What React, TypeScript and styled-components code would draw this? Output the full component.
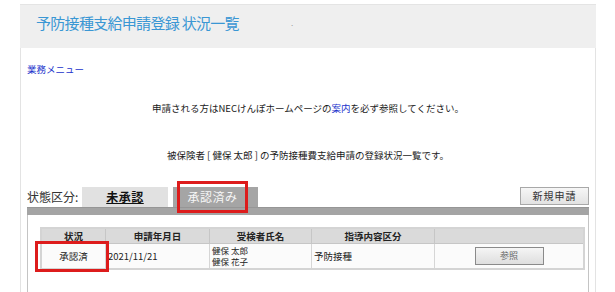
import React from "react";
import styled, { createGlobalStyle } from "styled-components";

const GlobalStyle = createGlobalStyle`
  html, body {
    margin: 0;
    padding: 0;
    background: #ffffff;
  }
  body {
    font-family: "Noto Sans CJK JP", "Noto Sans", sans-serif;
    color: #222222;
  }
`;

const Page = styled.div`
  width: 576px;
  margin: 4px 0 0 20px;
`;

const Header = styled.header`
  height: 44px;
  box-sizing: border-box;
  background: #efefef;
  border-top: 1px solid #e4e4e4;
  display: flex;
  align-items: flex-start;
  padding: 8px 0 0 16px;
`;

const Title = styled.h1`
  margin: 0;
  font-size: 15px;
  font-weight: normal;
  line-height: 20px;
  letter-spacing: -0.7px;
  color: #3a97d4;
`;

const Dot = styled.span`
  margin: 4px 0 0 52px;
  font-size: 8px;
  line-height: 12px;
  color: #9a9a9a;
`;

const Content = styled.main`
  border-left: 1px solid #e3e3e3;
  border-right: 1px solid #e3e3e3;
  padding: 14px 6px 0;
  min-height: 244px;
`;

const MenuLink = styled.a`
  display: block;
  font-size: 9.5px;
  line-height: 14px;
  color: #2233cc;
  text-decoration: none;
`;

const Notice = styled.p<{ $gap: number }>`
  margin: ${(p) => p.$gap}px 0 0;
  text-align: center;
  font-size: 9.5px;
  line-height: 14px;
  color: #1a1a1a;
  a {
    color: #2233cc;
    text-decoration: none;
  }
`;

const TabRow = styled.div`
  margin-top: 25px;
  display: flex;
  align-items: flex-end;
  height: 20px;
`;

const TabLabel = styled.span`
  width: 55px;
  font-size: 12px;
  line-height: 20px;
  color: #333;
`;

const Tab = styled.div<{ $active?: boolean; $width: number }>`
  position: relative;
  width: ${(p) => p.$width}px;
  height: 20px;
  margin-right: 5px;
  background: ${(p) => (p.$active ? "#a5a5a5" : "#e1e1e1")};
  color: ${(p) => (p.$active ? "#f6f6f6" : "#111")};
  font-size: 12px;
  font-weight: ${(p) => (p.$active ? "normal" : "bold")};
  text-decoration: ${(p) => (p.$active ? "none" : "underline")};
  line-height: 20px;
  text-align: center;
  letter-spacing: 0.5px;
  ${(p) =>
    p.$active &&
    `
    padding-right: 6px;
    box-sizing: border-box;
    &::after {
      content: "";
      position: absolute;
      top: -6px;
      bottom: -6px;
      left: 4px;
      right: 10px;
      border: 3px solid #dd1c1c;
    }
  `}
`;

const NewButton = styled.button`
  margin-left: auto;
  align-self: flex-start;
  width: 69px;
  height: 18px;
  padding: 0;
  border: 1px solid #a8a8a8;
  background: linear-gradient(#f6f6f6, #e2e2e2);
  font-family: inherit;
  font-size: 10px;
  line-height: 16px;
  letter-spacing: 1px;
  color: #333;
`;

const Bar = styled.div`
  height: 8px;
  background: #a4a4a4;
  border-top: 1px solid #969696;
  box-sizing: border-box;
`;

const Panel = styled.section`
  border-left: 1px solid #c4c4c4;
  border-right: 1px solid #c4c4c4;
  padding: 12px 11px 24px 12px;
`;

const Table = styled.table`
  width: 537px;
  table-layout: fixed;
  border-collapse: collapse;
  border: 2px solid #d4d4d4;
`;

const Th = styled.th<{ $width: number }>`
  width: ${(p) => p.$width}px;
  height: 14px;
  padding: 0;
  background: #dadada;
  border: 1px solid #c6c6c6;
  font-size: 9.5px;
  font-weight: bold;
  line-height: 13px;
  color: #222;
`;

const Td = styled.td<{ $align?: string }>`
  height: 24px;
  padding: 0 2px;
  background: #fbfbfb;
  border: 1px solid #d6d6d6;
  font-size: 9.5px;
  line-height: 12px;
  text-align: ${(p) => p.$align || "left"};
  color: #222;
`;

const StatusTd = styled(Td)`
  position: relative;
  &::after {
    content: "";
    position: absolute;
    top: -3px;
    bottom: -4px;
    left: -7px;
    right: -4px;
    border: 3px solid #dd1c1c;
  }
`;

const NameLine = styled.span`
  display: block;
  font-size: 8.5px;
  line-height: 11px;
`;

const ViewButton = styled.button`
  width: 69px;
  height: 18px;
  padding: 0;
  border: 1px solid #8a8a8a;
  background: linear-gradient(#f5f5f5, #dedede);
  font-family: inherit;
  font-size: 9px;
  line-height: 16px;
  color: #666;
`;

export default function App() {
  return (
    <>
      <GlobalStyle />
      <Page>
        <Header>
          <Title>予防接種支給申請登録 状況一覧</Title>
          <Dot>.</Dot>
        </Header>
        <Content>
          <MenuLink href="#">業務メニュー</MenuLink>
          <Notice $gap={25}>
            申請される方はNECけんぽホームページの<a href="#">案内</a>を必ず参照してください。
          </Notice>
          <Notice $gap={33}>
            被保険者 [ 健保 太郎 ] の予防接種費支給申請の登録状況一覧です。
          </Notice>
          <TabRow>
            <TabLabel>状態区分:</TabLabel>
            <Tab $width={86}>未承認</Tab>
            <Tab $width={85} $active>
              承認済み
            </Tab>
            <NewButton>新規申請</NewButton>
          </TabRow>
          <Bar />
          <Panel>
            <Table>
              <thead>
                <tr>
                  <Th $width={63}>状況</Th>
                  <Th $width={103}>申請年月日</Th>
                  <Th $width={101}>受検者氏名</Th>
                  <Th $width={122}>指導内容区分</Th>
                  <Th $width={148}></Th>
                </tr>
              </thead>
              <tbody>
                <tr>
                  <StatusTd $align="center">承認済</StatusTd>
                  <Td>2021/11/21</Td>
                  <Td>
                    <NameLine>健保 太郎</NameLine>
                    <NameLine>健保 花子</NameLine>
                  </Td>
                  <Td>予防接種</Td>
                  <Td $align="center">
                    <ViewButton>参照</ViewButton>
                  </Td>
                </tr>
              </tbody>
            </Table>
          </Panel>
        </Content>
      </Page>
    </>
  );
}
